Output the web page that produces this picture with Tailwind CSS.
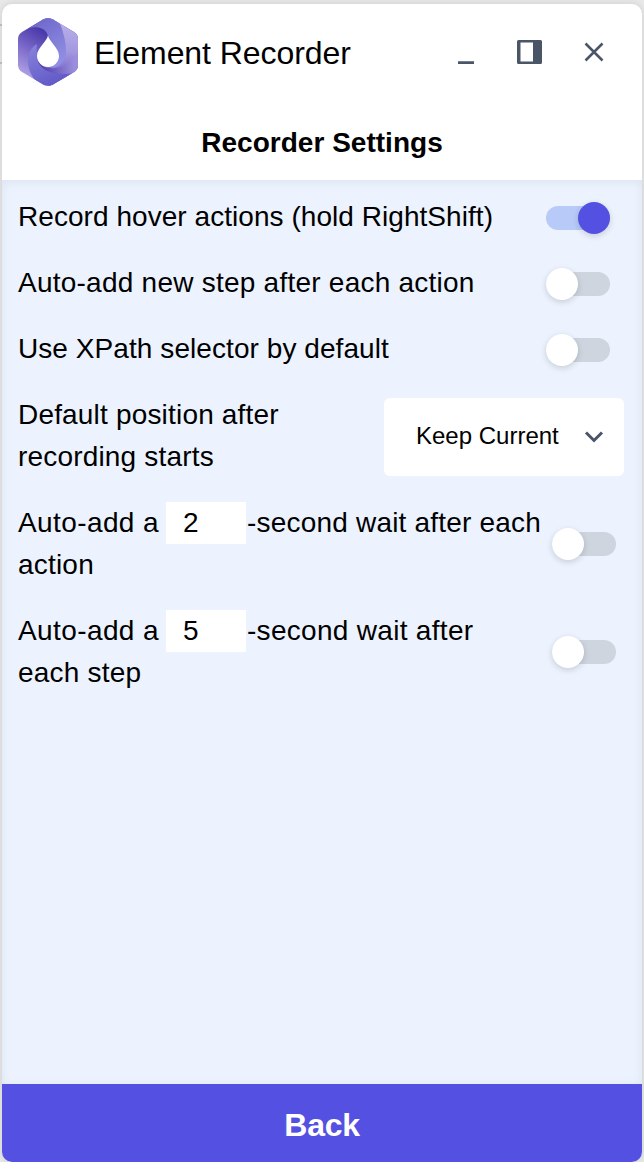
<!DOCTYPE html>
<html lang="en">
<head>
<meta charset="utf-8">
<title>Element Recorder</title>
<script src="https://cdn.jsdelivr.net/npm/@tailwindcss/browser@4"></script>
</head>
<body class="relative h-[1162px] w-[644px] overflow-hidden bg-[#e9e9e9] px-0.5 pt-1 font-['Liberation_Sans',Arial,sans-serif] text-black">
<div class="absolute left-0 top-6 h-10 w-0.5 border-y-2 border-[#b9b9b9]"></div>
<div class="flex h-[1158px] flex-col overflow-hidden rounded-[10px] bg-white shadow-[0_0_8px_rgba(0,0,0,0.12)]">
  <header class="flex h-24 shrink-0 items-center pl-4 pr-[38px]">
    <svg class="h-[68px] w-[60px] shrink-0" viewBox="0 0 60 68">
      <defs>
        <clipPath id="hex"><path d="M25 1.500Q30-1.200 35 1.500L56 14Q60 16.500 60 21V47Q60 51.500 56 54L35 66.500Q30 69.200 25 66.500L4 54Q0 51.500 0 47V21Q0 16.500 4 14Z"/></clipPath>
        <linearGradient id="left" gradientUnits="userSpaceOnUse" x1="26" y1="14" x2="3" y2="52"><stop offset="0" stop-color="#4a3aa8"/><stop offset=".45" stop-color="#7462c6"/><stop offset="1" stop-color="#a99be2"/></linearGradient>
        <linearGradient id="right" gradientUnits="userSpaceOnUse" x1="50" y1="8" x2="46" y2="58"><stop offset="0" stop-color="#b5ade9"/><stop offset=".5" stop-color="#a498e0"/><stop offset="1" stop-color="#7666c8"/></linearGradient>
        <linearGradient id="top" gradientUnits="userSpaceOnUse" x1="18" y1="4" x2="44" y2="42"><stop offset="0" stop-color="#7069cb"/><stop offset="1" stop-color="#8f8ee3"/></linearGradient>
        <linearGradient id="low" gradientUnits="userSpaceOnUse" x1="16" y1="26" x2="36" y2="64"><stop offset="0" stop-color="#8682db"/><stop offset="1" stop-color="#645cc8"/></linearGradient>
        <linearGradient id="under" gradientUnits="userSpaceOnUse" x1="22" y1="48" x2="56" y2="44"><stop offset="0" stop-color="#4e3eac"/><stop offset=".5" stop-color="#7464c6"/><stop offset="1" stop-color="#9b8fdb"/></linearGradient>
      </defs>
      <g clip-path="url(#hex)">
        <path fill="url(#left)" d="M0 0H60V68H0Z"/>
        <path fill="url(#right)" d="M33 0H60V68H30Z"/>
        <path fill="url(#under)" d="M19 38C20 46 26 50 32 50C41 51 48 48 60 36V56L42 63L20 58Z"/>
        <path fill="url(#top)" d="M11 10L30-2L38 2C41 4 43 7 44 11C46 18 48 24 48 33C48 42 43 49 34 50L40 40L30 18C28 10 20 8 11 10Z"/>
        <path fill="url(#low)" d="M19 26C18.500 30 18.500 34 19 38C19 50 32 59 57 55L30 70L17 62C12 56 10 49 10 43C10 36 13 29 19 26Z"/>
      </g>
      <path fill="#fff" d="M30 17.500C31.500 24 41 30 41 38A11 11 0 0 1 19 38C19 30 28.500 24 30 17.500Z"/>
    </svg>
    <h1 class="ml-4 mt-0.5 grow whitespace-nowrap text-[32px] leading-[48px] tracking-[-0.07px]">Element Recorder</h1>
    <div class="flex items-center text-[#4a5568]">
      <svg class="mr-[43px] h-6 w-4" viewBox="0 0 16 24"><path fill="currentColor" d="M0 21.200H16V24H0Z"/></svg>
      <svg class="mr-[42px] h-6 w-[25px]" viewBox="0 0 25 24"><path fill="currentColor" fill-rule="evenodd" d="M1.500 0H23.500Q25 0 25 1.500V22.500Q25 24 23.500 24H1.500Q0 24 0 22.500V1.500Q0 0 1.500 0ZM3.500 2.500V21.500H16V2.500Z"/></svg>
      <svg class="h-5 w-5" viewBox="0 0 20 20" fill="none" stroke="currentColor" stroke-width="2.500"><path d="M1.500 1.500L18.500 18.500M18.500 1.500L1.500 18.500"/></svg>
    </div>
  </header>
  <h2 class="h-20 shrink-0 pt-[22px] text-center text-[28px] font-bold leading-[42px] tracking-[0.02px]">Recorder Settings</h2>
  <main class="flex grow flex-col gap-6 bg-[#ecf3fe] px-4 pt-4 text-[28px] leading-[42px] shadow-[inset_0_2px_10px_rgba(100,120,150,0.13)]">
    <div class="flex h-[42px] items-center justify-between pr-4">
      <span class="whitespace-nowrap tracking-[0.05px]">Record hover actions (hold RightShift)</span>
      <span class="mt-0.5 flex h-6 w-16 items-center justify-end rounded-full bg-[#b7caf8]"><span class="size-8 rounded-full bg-[#5451e2] shadow-[0_2px_6px_rgba(0,0,0,0.16)]"></span></span>
    </div>
    <div class="flex h-[42px] items-center justify-between pr-4">
      <span class="whitespace-nowrap tracking-[0.24px]">Auto-add new step after each action</span>
      <span class="mt-0.5 flex h-6 w-16 items-center rounded-full bg-[#ced5df]"><span class="size-8 rounded-full bg-white shadow-[0_2px_6px_rgba(0,0,0,0.16)]"></span></span>
    </div>
    <div class="flex h-[42px] items-center justify-between pr-4">
      <span class="whitespace-nowrap tracking-[0.07px]">Use XPath selector by default</span>
      <span class="mt-0.5 flex h-6 w-16 items-center rounded-full bg-[#ced5df]"><span class="size-8 rounded-full bg-white shadow-[0_2px_6px_rgba(0,0,0,0.16)]"></span></span>
    </div>
    <div class="flex h-[84px] items-center justify-between pr-0.5">
      <span class="whitespace-nowrap tracking-[0.18px]">Default position after<br>recording starts</span>
      <div class="mt-0.5 flex h-[78px] w-60 items-center justify-between rounded-md bg-white pl-8 pr-5 text-2xl leading-9">
        <span class="whitespace-nowrap pb-0.5">Keep Current</span>
        <svg class="h-3 w-5" viewBox="0 0 20 12" fill="none" stroke="#4a5568" stroke-width="3"><path d="M2 1.500L10 9.500L18 1.500"/></svg>
      </div>
    </div>
    <div class="flex h-[84px] items-center justify-between pr-2.5">
      <div class="whitespace-nowrap tracking-[0.2px]"><div class="flex"><span class="w-[148px] tracking-[0.4px]">Auto-add a</span><span class="w-20 bg-white pl-[17px]">2</span><span class="pl-px">-second wait after each</span></div>action</div>
      <span class="flex h-6 w-16 items-center rounded-full bg-[#ced5df]"><span class="size-8 rounded-full bg-white shadow-[0_2px_6px_rgba(0,0,0,0.16)]"></span></span>
    </div>
    <div class="flex h-[84px] items-center justify-between pr-2.5">
      <div class="whitespace-nowrap tracking-[0.2px]"><div class="flex"><span class="w-[148px] tracking-[0.4px]">Auto-add a</span><span class="w-20 bg-white pl-[17px]">5</span><span class="pl-px tracking-[0.3px]">-second wait after</span></div>each step</div>
      <span class="flex h-6 w-16 items-center rounded-full bg-[#ced5df]"><span class="size-8 rounded-full bg-white shadow-[0_2px_6px_rgba(0,0,0,0.16)]"></span></span>
    </div>
  </main>
  <button class="h-[78px] shrink-0 bg-[#5451e2] pt-1 text-[32px] font-bold leading-[48px] tracking-[-0.3px] text-white">Back</button>
</div>
</body>
</html>
